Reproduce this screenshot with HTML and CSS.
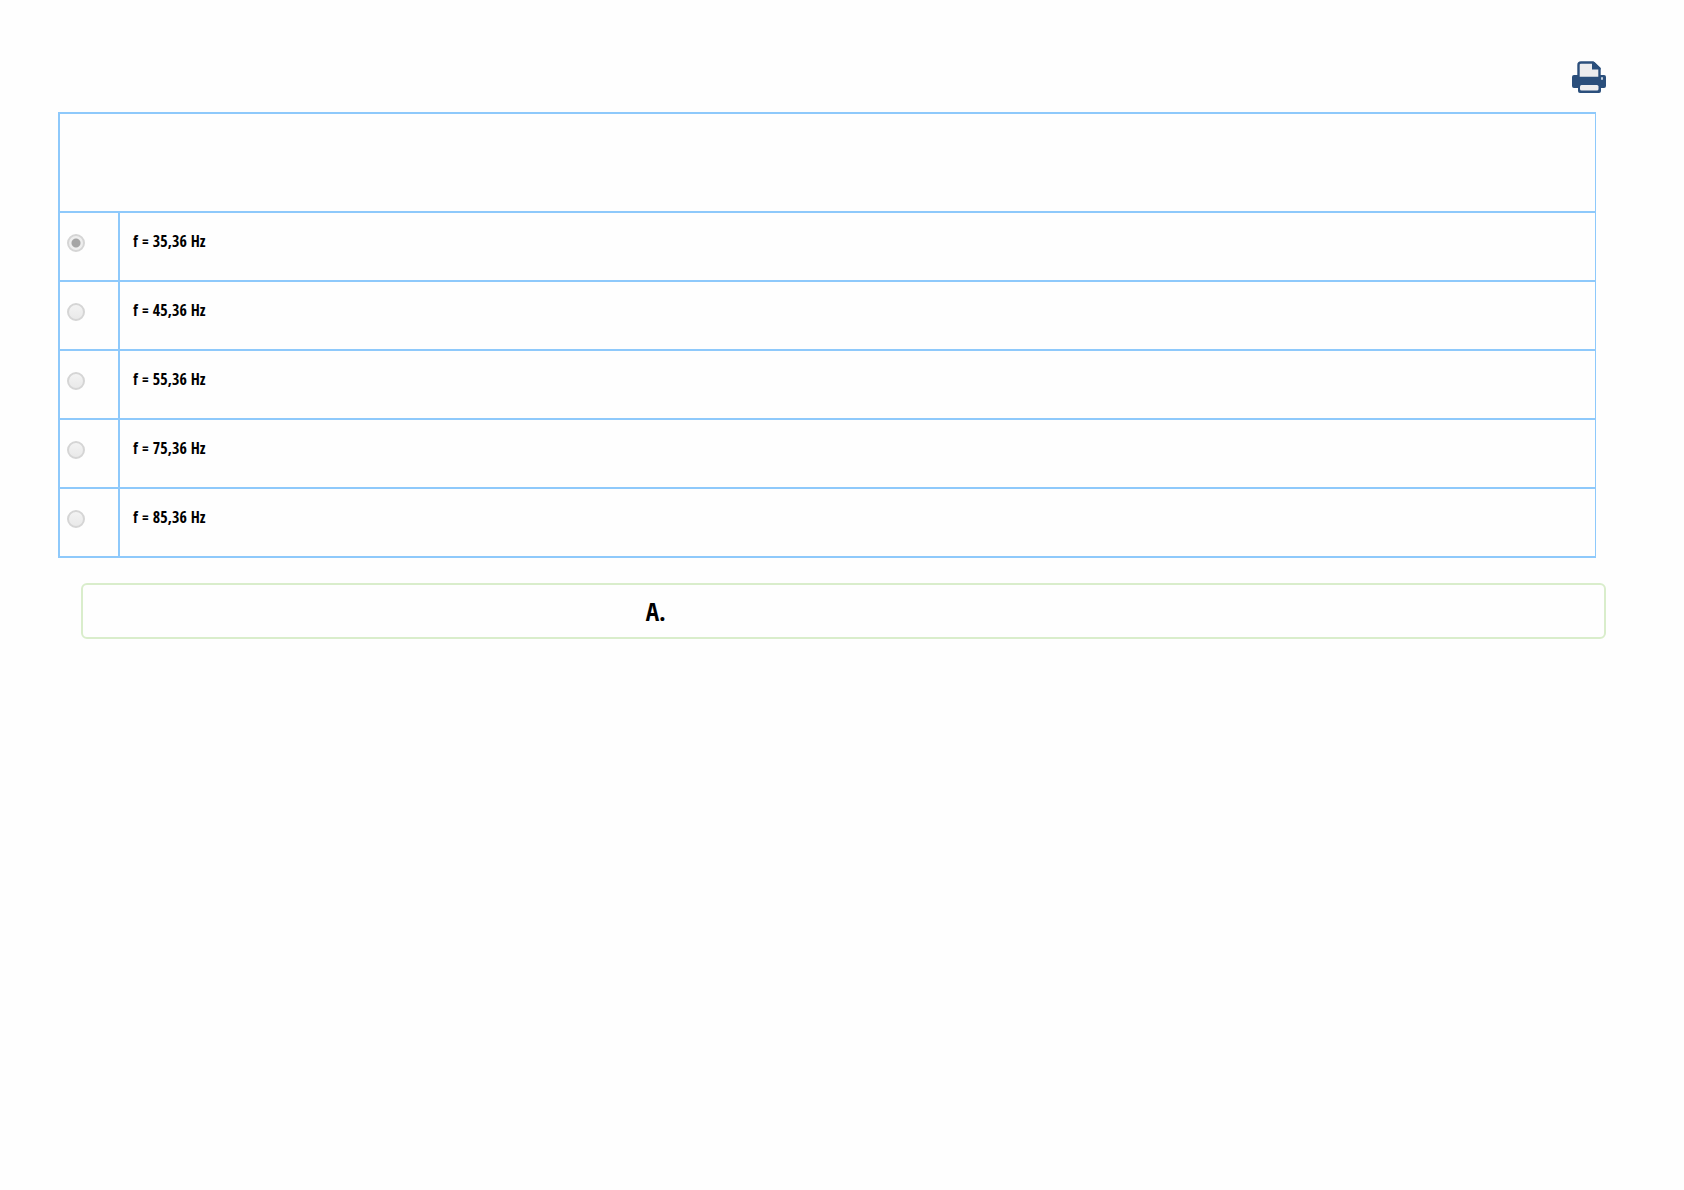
FILE: index.html
```html
<!DOCTYPE html>
<html lang="en">
<head>
<meta charset="utf-8">
<title>Question</title>
<link rel="stylesheet" href="styles.css">
</head>
<body>
<main class="page">
  <header class="toolbar">
    <button class="print" type="button" aria-label="Print">
      <svg viewBox="0 0 34 33" width="34" height="33" aria-hidden="true">
        <path d="M6.500 17V4q0-2.500 2.500-2.500h12l6.500 6V17z" fill="#ececee" stroke="#2b4f7c" stroke-width="2.400"/>
        <path d="M20 1v7.500h8.500V7L22.500 1z" fill="#2b4f7c"/>
        <path d="M2 14h4v2h22v-2h4q2 0 2 2v9q0 2-2 2h-3v3q0 2-2 2H8q-2 0-2-2v-3H2q-2 0-2-2v-9q0-2 2-2z" fill="#2b4f7c"/>
        <rect x="8" y="24" width="18.500" height="5.500" rx="1.500" fill="#eeeef0"/>
        <rect x="29" y="16" width="2" height="3" rx="1" fill="#c5d0df"/>
      </svg>
    </button>
  </header>
  <table class="answers">
    <tbody>
      <tr class="question"><td colspan="2"></td></tr>
      <tr><td class="pick"><input class="radio" type="radio" name="answer" id="a1" checked></td><td class="option"><label for="a1">f = 35,36 Hz</label></td></tr>
      <tr><td class="pick"><input class="radio" type="radio" name="answer" id="a2"></td><td class="option"><label for="a2">f = 45,36 Hz</label></td></tr>
      <tr><td class="pick"><input class="radio" type="radio" name="answer" id="a3"></td><td class="option"><label for="a3">f = 55,36 Hz</label></td></tr>
      <tr><td class="pick"><input class="radio" type="radio" name="answer" id="a4"></td><td class="option"><label for="a4">f = 75,36 Hz</label></td></tr>
      <tr><td class="pick"><input class="radio" type="radio" name="answer" id="a5"></td><td class="option"><label for="a5">f = 85,36 Hz</label></td></tr>
    </tbody>
  </table>
  <section class="result"><strong class="letter">A.</strong></section>
</main>
</body>
</html>
```
FILE: styles.css
```css
* { box-sizing: border-box; }

body {
  margin: 0;
  background: #fefefe;
  color: #000;
  font-family: "Open Sans Condensed", "Liberation Sans Narrow", "Liberation Sans", sans-serif;
  font-size: 16px;
  font-weight: 700;
}

.page { padding: 61px 78px 40px 58px; }

.toolbar {
  display: flex;
  justify-content: flex-end;
  margin-bottom: 18px;
}

.print {
  padding: 0;
  border: 0;
  background: none;
  cursor: pointer;
}

.print svg { display: block; }

.answers {
  width: calc(100% - 10px);
  border-spacing: 0;
  border: solid #8ec9fb;
  border-width: 2px 1px 0 2px;
}

.answers td {
  height: 69px;
  padding: 0;
  border-bottom: 2px solid #8ec9fb;
  vertical-align: top;
}

.answers .question td { height: 99px; }

.answers .pick {
  width: 60px;
  padding: 21px 7px 0;
  border-right: 2px solid #8ec9fb;
}

.answers .option {
  padding: 18px 13px 0;
  line-height: 20px;
}

.radio {
  appearance: none;
  display: block;
  width: 18px;
  height: 18px;
  margin: 0;
  border: 2px solid #d5d5d5;
  border-radius: 50%;
  background: linear-gradient(#f3f3f3, #e9e9e9);
}

.radio:checked {
  background: radial-gradient(circle, #a5a5a5 4px, #eee 5px);
}

.result {
  display: grid;
  grid-template-columns: 37fr 63fr;
  align-items: center;
  height: 56px;
  margin: 25px 0 0 23px;
  border: 2px solid #d9edcb;
  border-radius: 6px;
}

.letter {
  grid-column: 2;
  font-size: 25px;
  line-height: 32px;
}
```
